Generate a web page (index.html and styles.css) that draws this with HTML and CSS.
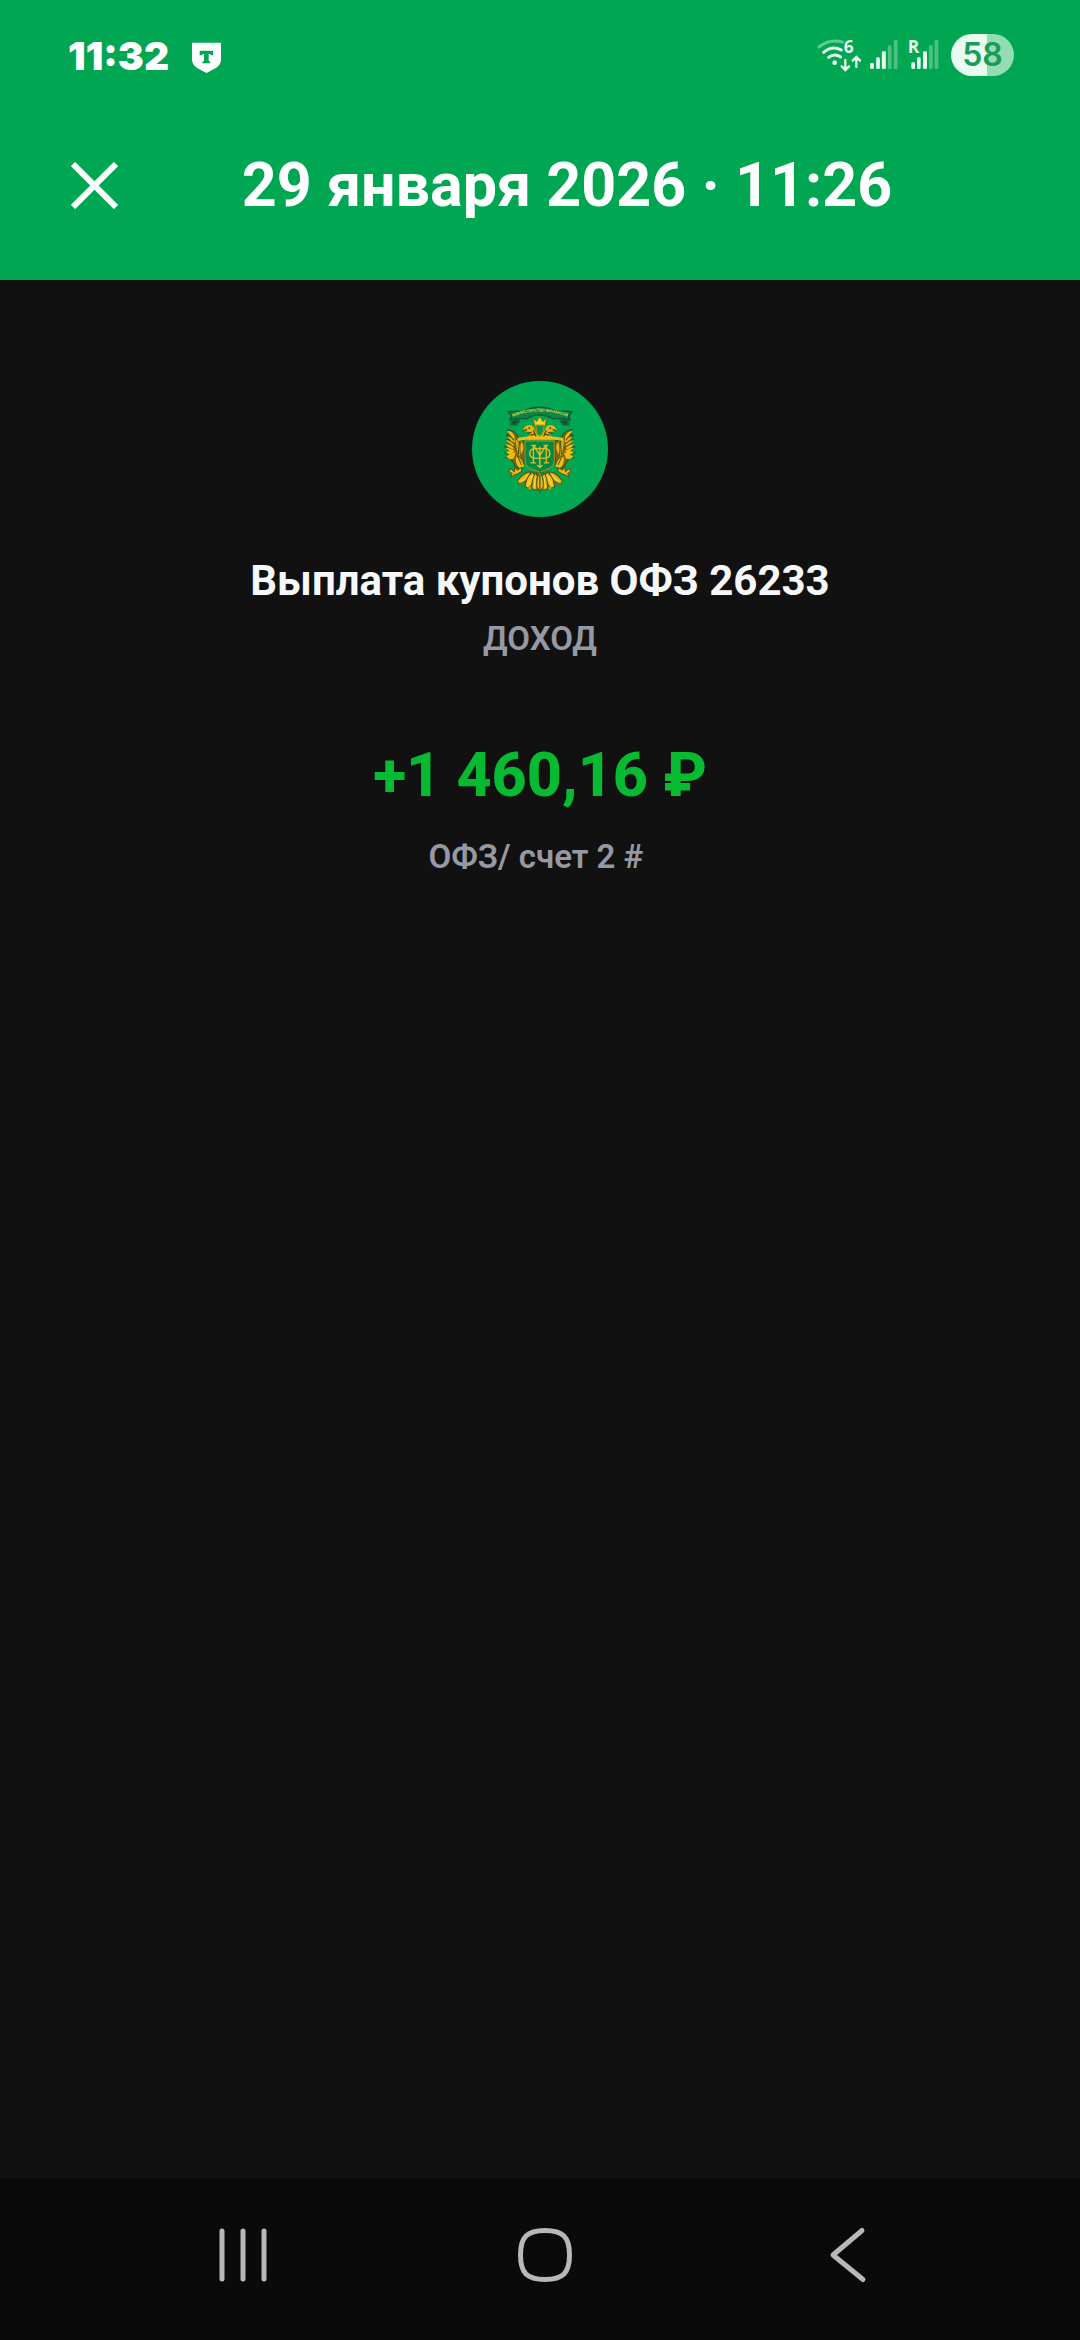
FILE: index.html
```html
<!DOCTYPE html>
<html lang="ru">
	<head>
		<meta charset="utf-8" />
		<meta name="viewport" content="width=device-width, initial-scale=1" />
		<title>Выплата купонов ОФЗ 26233</title>
		<link rel="stylesheet" href="styles.css">
	</head>
	<body>
		<header class="header">
			<div class="status">
				<span class="time">11:32</span>
				<svg class="shield" viewBox="450 45 93 120" aria-hidden="true">
					<path fill="#fff" d="M453 68H540V118Q540 134 526 143L496.500 159L467 143Q453 134 453 118Z"/>
					<path fill="#00a651" d="M476 92H516V106H509V102H503V123L508 125V130H484V125L489 123V102H484V106H476Z"/>
				</svg>
				<div class="signals">
					<svg class="wifi" viewBox="51 45 135 120" aria-hidden="true">
						<g fill="none" stroke="#e6fbee" stroke-width="9" stroke-linecap="round">
							<path stroke="#5fcb92" d="M57 81Q88 55 127 66"/>
							<path d="M71 97Q95 75 124 90"/>
							<path d="M86 112Q104 99 122 111"/>
							<path stroke-width="7" d="M136 120V149M125 139L136 150L147 139M169 141V112M158 122L169 111L180 122"/>
						</g>
						<circle cx="104" cy="128" r="7" fill="#e6fbee"/>
						<text x="131" y="99" fill="#e6fbee">6</text>
					</svg>
					<svg class="bars" viewBox="210 45 83 120" aria-hidden="true">
						<g fill="#e6fbee">
							<rect x="210" y="129" width="11" height="18" rx="4"/>
							<rect x="228" y="112" width="11" height="35" rx="4"/>
							<rect x="245" y="94" width="12" height="53" rx="4"/>
						</g>
						<g fill="#4dc184">
							<rect x="263" y="76" width="11" height="71" rx="4"/>
							<rect x="281" y="60" width="11" height="87" rx="4"/>
						</g>
					</svg>
					<svg class="bars-r" viewBox="324 45 93 120" aria-hidden="true">
						<g fill="#e6fbee">
							<rect x="334" y="127" width="11" height="20" rx="4"/>
							<rect x="351" y="112" width="11" height="35" rx="4"/>
							<rect x="369" y="94" width="12" height="53" rx="4"/>
						</g>
						<g fill="#4dc184">
							<rect x="387" y="76" width="11" height="71" rx="4"/>
							<rect x="404" y="60" width="11" height="87" rx="4"/>
						</g>
						<text x="323" y="99" fill="#e6fbee">R</text>
					</svg>
					<span class="battery">58</span>
				</div>
			</div>
			<div class="titlebar">
				<button class="close" type="button" aria-label="Закрыть">
					<svg viewBox="0 0 47 47"><path d="M2 2L45 45M45 2L2 45" stroke="#fff" stroke-width="6"/></svg>
				</button>
				<h1 class="title">29 января 2026 · 11:26</h1>
			</div>
		</header>

		<main class="content">
			<svg class="logo" viewBox="39 32 405 405" aria-hidden="true">
				<defs>
					<path id="ribbon" d="M164 137Q240 109 320 137"/>
					<!-- left half of the eagle, mirrored for the right one -->
					<g id="half">
						<path d="M152 167C153 159 149 150 157 145Q171 145 184 148L176 163Z" fill="#087a45"/>
						<path d="M158 154Q172 146 180 153Q170 153 168 163Q160 165 158 154Z" fill="#20482c"/>
						<path d="M201 199C214 194 216 188 207 183L190 181Q195 162 211 163Q222 164 226 177Q231 190 239 194V207H202Z" fill="#e8b516"/>
						<path d="M191 181L203 176M207 171L212 174M203 188L217 185M213 194L225 190M222 179L230 199" stroke="#514612" stroke-width="4"/>
						<path d="M145 177L161 181L172 191L178 207L197 211V252L193 283L187 294L168 288L162 273L152 263L140 260L150 250L137 246L150 235L136 228L151 222L140 207L153 207L141 192L155 193Z" fill="#7c6510" stroke="#25602d" stroke-width="4"/>
						<path d="M144 180Q158 181 165 195L167 215Q152 211 144 197L156 202ZM139 208Q152 210 164 221L162 235Q146 231 139 221L151 222ZM139 231Q153 231 166 240L158 252Q143 250 139 242L151 241ZM141 256Q155 248 170 244L163 263Q148 269 141 256Z" fill="#efba13"/>
						<path d="M169 206Q180 210 181 228V258Q171 245 169 206Z" fill="#d8a914"/>
						<path d="M186 213Q193 221 192 232L186 251Q180 234 186 213Z" fill="#e9b51b"/>
						<path d="M170 257Q180 258 187 269L195 286L182 292Q166 281 170 257Z" fill="#f2bd13"/>
						<path d="M153 292L165 302L166 289L174 297L186 290L187 301L177 307L165 312L155 319L158 307L149 301Z" fill="#efb813" stroke="#66551a" stroke-width="3"/>
						<path d="M174 255L187 282M147 188L164 209M144 215L169 232M180 211L177 250" stroke="#40551e" stroke-width="3"/>
						<path d="M214 302Q193 304 178 325Q172 329 177 335Q185 343 194 333Q210 323 214 302Z" fill="#e9b415" stroke="#51501a" stroke-width="3"/>
						<path d="M222 302Q207 311 201 328L197 345Q204 356 214 345L224 323Z" fill="#f2be17" stroke="#51501a" stroke-width="3"/>
						<path d="M231 303Q220 314 219 335Q214 354 224 356Q237 359 233 337Z" fill="#e6b116" stroke="#51501a" stroke-width="3"/>
						<path d="M183 330Q197 325 205 311M205 342Q210 324 222 312M225 350Q225 327 231 315" stroke="#fbdc3d" stroke-width="3"/>
						<circle cx="188" cy="337" r="4" fill="#8b6c10"/>
						<circle cx="211" cy="351" r="4" fill="#d7a514"/>
					</g>
				</defs>
				<circle cx="241.500" cy="234.500" r="202.500" fill="#00a651"/>
				<g fill="none" stroke-linejoin="round">
					<use href="#half"/>
					<use href="#half" transform="translate(482 0) scale(-1 1)"/>
					<path d="M147 123Q171 120 191 123Q216 110 241 110Q266 110 290 123Q312 120 337 123L327 136L332 148Q303 142 283 145Q262 134 241 133Q217 134 201 145Q178 142 152 148L157 136Z" fill="#08864a" stroke="#15532f" stroke-width="4"/>
					<path d="M221 143L231 153L241 138L250 153L260 143L257 166H226Z" fill="#f6d321" stroke="#785d0e" stroke-width="2"/>
					<path d="M229 163H254L249 190L241 196L232 190Z" fill="#099849" stroke="#bc9514" stroke-width="3"/>
					<path d="M175 206Q211 198 241 202Q271 198 311 206" stroke="#f0be19" stroke-width="9"/>
					<path d="M197 211H284V268Q284 287 265 294L241 303L216 294Q197 287 197 268Z" fill="#008a43" stroke="#b58c12" stroke-width="3"/>
					<g stroke="#e3bc21" stroke-width="4">
						<path d="M216 224H230M252 224H266M222 225V275M260 225V275M213 276H229M253 276H269"/>
						<path d="M224 226L241 254L258 226M241 228V289M233 282L241 290L249 282"/>
						<path d="M241 234C222 230 211 236 211 248S222 265 241 261C260 265 271 260 271 248S260 230 241 234"/>
					</g>
					<path d="M241 300Q229 325 232 348L241 362L251 348Q254 325 241 300Z" fill="#edb711" stroke="#5d511a" stroke-width="3"/>
					<path d="M241 309V365" stroke="#26752e" stroke-width="4"/>
				</g>
				<text class="ribbon-text"><textPath href="#ribbon" startOffset="50%">МИНИСТЕРСТВО ФИНАНСОВ</textPath></text>
			</svg>
			<h2 class="name">Выплата купонов ОФЗ 26233</h2>
			<p class="kind">ДОХОД</p>
			<p class="amount">+1 460,16 ₽</p>
			<p class="account">ОФЗ/ счет 2 #&nbsp;</p>
		</main>

		<nav class="navbar">
			<button type="button" aria-label="Недавние приложения">
				<svg viewBox="0 0 60 60"><path d="M9 6V54M30 6V54M51 6V54"/></svg>
			</button>
			<button type="button" aria-label="Главный экран">
				<svg viewBox="0 0 60 60"><path d="M30 5.500C48 5.500 54.500 12 54.500 30S48 54.500 30 54.500S5.500 48 5.500 30S12 5.500 30 5.500Z"/></svg>
			</button>
			<button type="button" aria-label="Назад">
				<svg viewBox="0 0 60 60"><path d="M44 5.500L15 30L45 54.500"/></svg>
			</button>
		</nav>
	</body>
</html>
```
FILE: styles.css
```css
*{
	margin:0;
	padding:0;
	box-sizing:border-box;
}
body{
	display:flex;
	flex-direction:column;
	min-height:100vh;
	background:#111;
	color:#f6f7f8;
	font-family:Roboto, "Noto Sans", sans-serif;
}
button{
	border:0;
	background:none;
	cursor:pointer;
}
svg{
	display:block;
}
.header{
	background:#00a651;
	color:#fff;
}
.status{
	display:flex;
	align-items:center;
	height:110px;
	padding:0 66px 0 68px;
	font-family:Inter, Roboto, sans-serif;
}
.time{
	font-size:39px;
	font-weight:900;
}
.shield{
	width:31px;
	height:40px;
	margin-left:22px;
}
.signals{
	display:flex;
	align-items:center;
	margin-left:auto;
}
.signals text{
	font-family:"Open Sans", sans-serif;
	font-size:52px;
	font-weight:700;
}
.wifi{
	width:45px;
	height:40px;
	margin-right:8px;
}
.bars{
	width:28px;
	height:40px;
	margin-right:10px;
}
.bars-r{
	width:31px;
	height:40px;
	margin-right:12px;
}
.battery{
	width:63px;
	height:42px;
	border-radius:21px;
	background:linear-gradient(90deg, #e8fbf0 57%, #93dcb4 57%);
	color:#1b9a58;
	font-size:32px;
	font-weight:600;
	line-height:42px;
	text-align:center;
}
.titlebar{
	display:flex;
	align-items:center;
	height:170px;
	padding:0 64px 20px 71px;
}
.close{
	width:47px;
	height:47px;
}
.title{
	flex:1;
	font-size:61px;
	font-weight:700;
	text-align:center;
}
.content{
	flex:1;
	display:flex;
	flex-direction:column;
	align-items:center;
	padding-top:101px;
	text-align:center;
}
.logo{
	width:136px;
	height:136px;
	margin-bottom:38px;
}
.ribbon-text{
	fill:#d6d84a;
	font-size:12px;
	font-weight:700;
	text-anchor:middle;
}
.name{
	margin-bottom:12px;
	font-size:42px;
	font-weight:700;
	line-height:52px;
}
.kind, .account{
	color:#9699a2;
	font-size:33px;
	font-weight:600;
	line-height:40px;
}
.amount{
	margin:80px 0 26px;
	color:#06bb31;
	font-size:61px;
	font-weight:800;
	line-height:72px;
}
.navbar{
	display:grid;
	grid-template-columns:repeat(3, 1fr);
	height:162px;
	padding:0 81px 8px 92px;
	background:#0a0a0a;
}
.navbar button{
	display:flex;
	align-items:center;
	justify-content:center;
}
.navbar svg{
	width:60px;
	height:60px;
	fill:none;
	stroke:#b8b8b8;
	stroke-width:5;
	stroke-linecap:round;
	stroke-linejoin:round;
}
```
